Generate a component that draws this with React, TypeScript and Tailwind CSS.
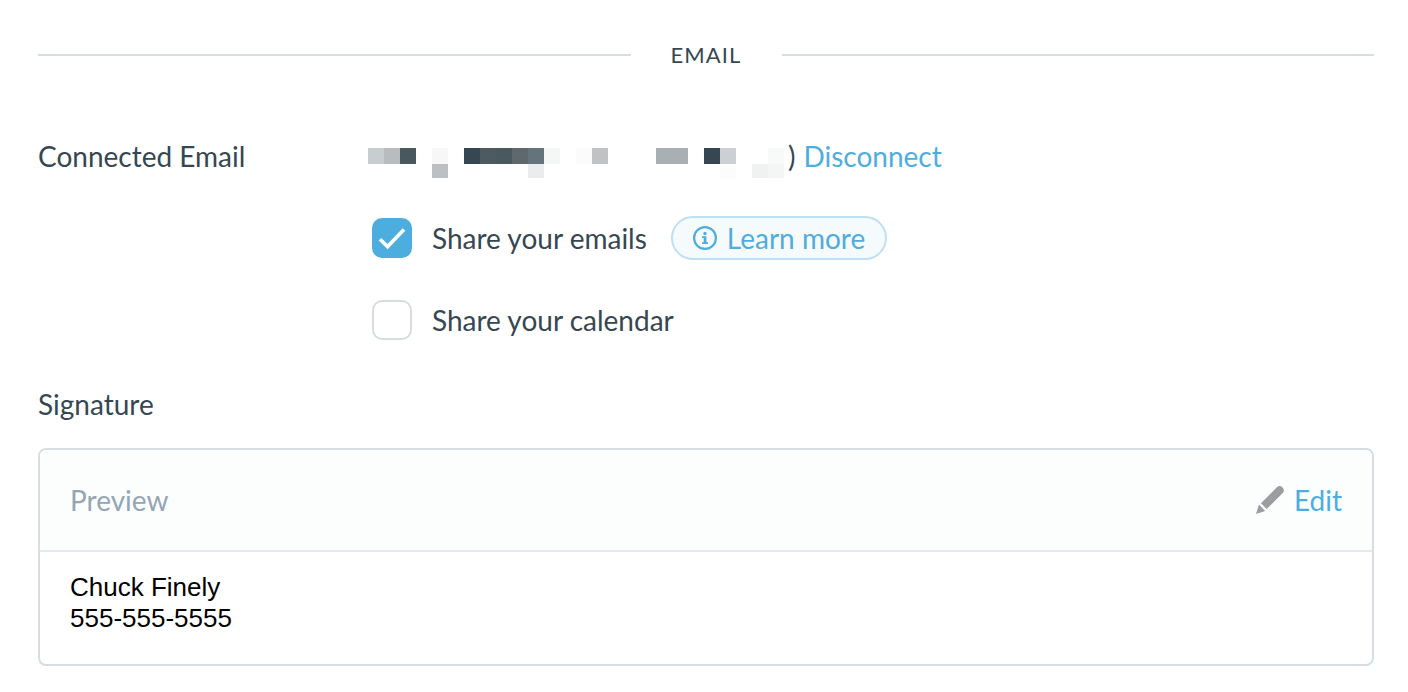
import { useState } from "react";

const TOP_BLOCKS: [number, string][] = [
  [0, "#c8cdd0"],
  [16, "#b9bcbe"],
  [32, "#49575f"],
  [64, "#f7f7f7"],
  [96, "#364752"],
  [112, "#4e5a61"],
  [128, "#4a585f"],
  [144, "#5e686d"],
  [160, "#65737c"],
  [176, "#f5f7f7"],
  [208, "#fbfbfb"],
  [224, "#c1c2c4"],
  [288, "#a8b0b4"],
  [304, "#a9afb3"],
  [336, "#364752"],
  [352, "#cccfd3"],
  [400, "#f8fafa"]
];

const BOTTOM_BLOCKS: [number, string][] = [
  [64, "#bdc0c3"],
  [160, "#ebecee"],
  [352, "#fcfcfc"],
  [384, "#f0f2f2"],
  [400, "#f4f6f6"]
];

function HiddenAddress() {
  return (
    <svg width="420" height="30" viewBox="0 0 420 30" shapeRendering="crispEdges" aria-hidden="true" className="shrink-0">
      {TOP_BLOCKS.map(([x, fill]) => (
        <rect key={x} x={x} y="0" width="16" height="16" fill={fill} />
      ))}
      {BOTTOM_BLOCKS.map(([x, fill]) => (
        <rect key={x} x={x} y="16" width="16" height="14" fill={fill} />
      ))}
    </svg>
  );
}

function InfoIcon() {
  return (
    <svg width="24" height="24" viewBox="0 0 24 24" fill="none" aria-hidden="true">
      <circle cx="12" cy="12" r="10.9" stroke="currentColor" strokeWidth="2.2" />
      <circle cx="12" cy="7.4" r="1.7" fill="currentColor" />
      <path d="M9 10.2h4.4v6.1H15V18H9v-1.7h1.7v-4.4H9z" fill="currentColor" />
    </svg>
  );
}

function PencilIcon() {
  return (
    <svg width="28" height="28" viewBox="0 0 28 28" fill="#9b9da0" aria-hidden="true">
      <path d="M4.9 17.3 20.7 1.5a4.1 4.1 0 0 1 5.8 5.8L10.7 23.1z" />
      <path d="M3 18.4 9.2 25 0 28z" />
    </svg>
  );
}

function Checkbox({
  id,
  label,
  checked,
  onChange
}: {
  id: string;
  label: string;
  checked: boolean;
  onChange: (checked: boolean) => void;
}) {
  return (
    <div className="flex items-center gap-5">
      <span className="relative flex">
        <input
          id={id}
          type="checkbox"
          checked={checked}
          onChange={(e) => onChange(e.target.checked)}
          className="peer size-10 cursor-pointer appearance-none rounded-[10px] border-2 border-[#d7dde1] bg-white checked:border-[#4eaddf] checked:bg-[#4eaddf]"
        />
        <svg
          viewBox="0 0 40 40"
          fill="none"
          aria-hidden="true"
          className="pointer-events-none absolute inset-0 hidden size-10 peer-checked:block"
        >
          <path d="M8 21.2l7.6 7.4L32 11.6" stroke="white" strokeWidth="3.6" />
        </svg>
      </span>
      <label htmlFor={id} className="cursor-pointer">
        {label}
      </label>
    </div>
  );
}

export default function App() {
  const [shareEmails, setShareEmails] = useState(true);
  const [shareCalendar, setShareCalendar] = useState(false);

  return (
    <main className="bg-white pt-[39px] pr-[34px] pb-6 pl-[38px] font-['Lato',sans-serif] text-[28px] leading-10 text-[#364752]">
      <div className="flex items-center gap-10">
        <div className="h-[2px] flex-1 bg-[#d7dde1]" />
        <h2 className="text-[22px] leading-8 tracking-wider">EMAIL</h2>
        <div className="h-[2px] flex-1 bg-[#d7dde1]" />
      </div>

      <section className="mt-[65px] flex">
        <h3 className="w-[330px] shrink-0">Connected Email</h3>
        <div className="flex flex-col gap-[42px]">
          <div className="flex h-10 items-center">
            <div className="flex items-center pt-3.5">
              <HiddenAddress />
            </div>
            <span>)</span>
            <a href="#disconnect" className="ml-2 text-[#4eaddf]">
              Disconnect
            </a>
          </div>
          <div className="flex h-10 items-center gap-6 pl-1">
            <Checkbox id="share-emails" label="Share your emails" checked={shareEmails} onChange={setShareEmails} />
            <button
              type="button"
              className="flex h-11 cursor-pointer items-center gap-2.5 rounded-full border-2 border-[#bfdff2] bg-[#f5fafd] px-5 text-[#4eaddf]"
            >
              <InfoIcon />
              Learn more
            </button>
          </div>
          <div className="flex h-10 items-center pl-1">
            <Checkbox
              id="share-calendar"
              label="Share your calendar"
              checked={shareCalendar}
              onChange={setShareCalendar}
            />
          </div>
        </div>
      </section>

      <section className="mt-11">
        <h3>Signature</h3>
        <div className="mt-6 overflow-hidden rounded-lg border-2 border-[#d7dde1]">
          <div className="flex h-[102px] items-center justify-between border-b-2 border-[#e4e9ed] bg-[#fcfefe] px-[30px]">
            <span className="text-[#94a5b5]">Preview</span>
            <button type="button" className="flex cursor-pointer items-center gap-2.5 text-[#4eaddf]">
              <PencilIcon />
              Edit
            </button>
          </div>
          <div className="px-[30px] pt-5 pb-[30px] font-['Liberation_Sans',Arial,sans-serif] text-[26px] leading-[31px] text-black">
            <p>Chuck Finely</p>
            <p>555-555-5555</p>
          </div>
        </div>
      </section>
    </main>
  );
}
